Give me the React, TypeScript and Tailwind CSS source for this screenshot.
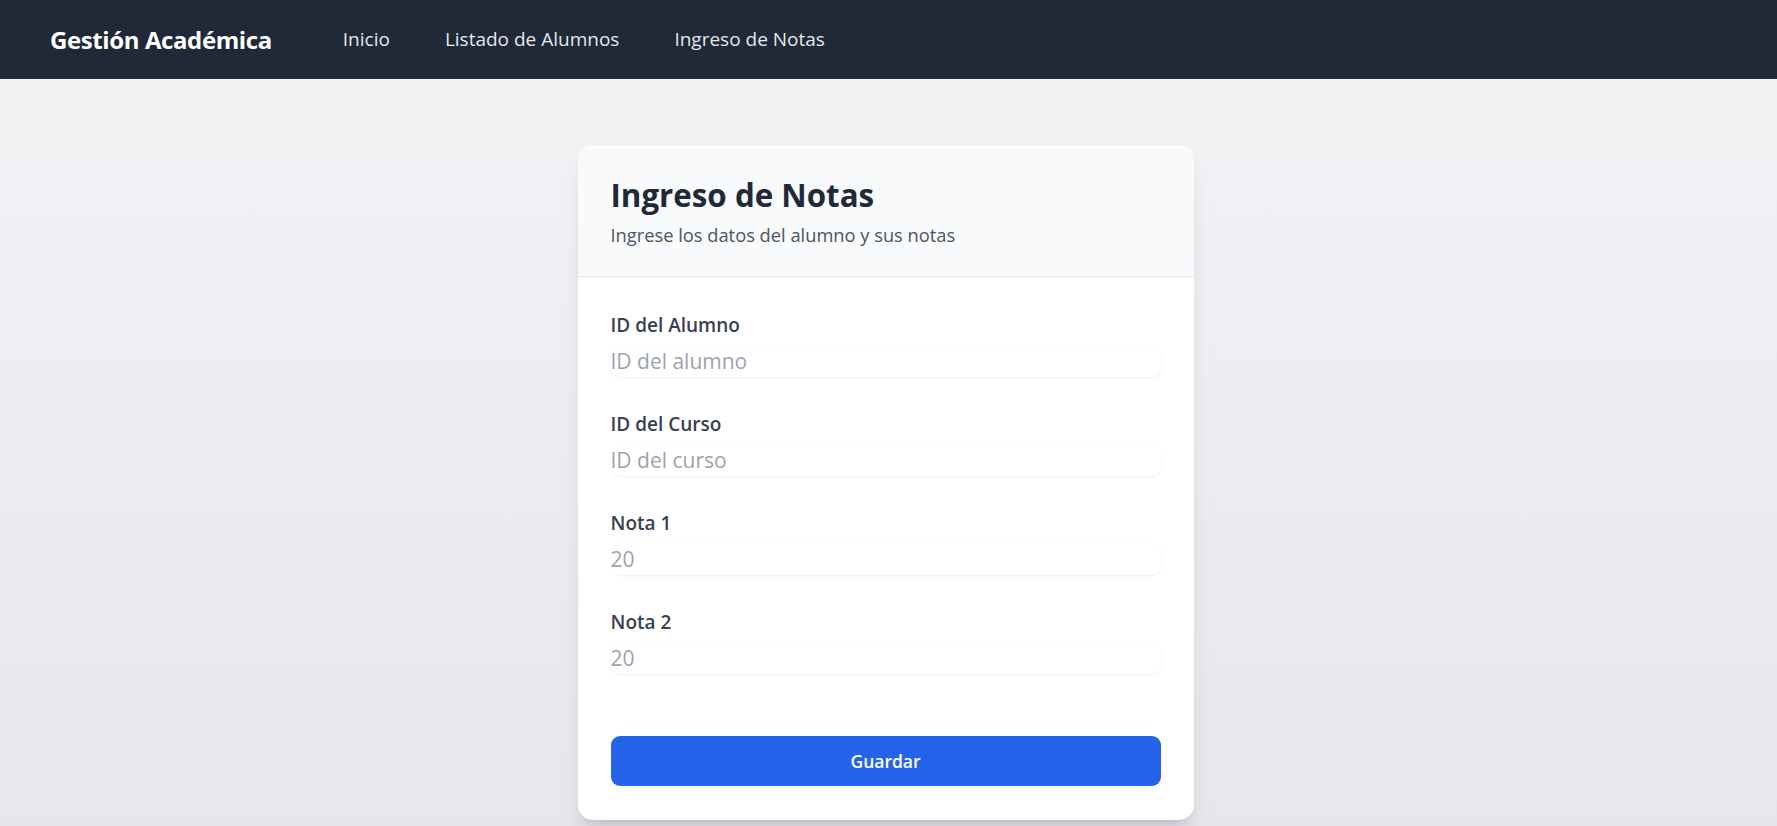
const fields = [
  { label: 'ID del Alumno', placeholder: 'ID del alumno', type: 'text' },
  { label: 'ID del Curso', placeholder: 'ID del curso', type: 'text' },
  { label: 'Nota 1', placeholder: '20', type: 'number' },
  { label: 'Nota 2', placeholder: '20', type: 'number' },
]

const links = ['Inicio', 'Listado de Alumnos', 'Ingreso de Notas']

export default function App() {
  return (
    <div className="min-h-screen bg-gradient-to-b from-[#f3f4f6] to-[#e6e7eb] font-['Open_Sans',sans-serif]">
      <nav className="h-[79px] bg-[#1f2937] flex items-center px-[50px]">
        <a href="#" className="text-white text-[24px] font-bold tracking-[-0.4px]">Gestión Académica</a>
        <ul className="flex items-center gap-[55px] ml-[71px]">
          {links.map((l) => (
            <li key={l}>
              <a href="#" className="text-[#e5e7eb] text-[19px] font-medium">{l}</a>
            </li>
          ))}
        </ul>
      </nav>

      <main className="pt-[66px] pr-[6px]">
        <div className="w-[616px] mx-auto bg-white rounded-[15px] shadow-xl overflow-hidden">
          <div className="bg-[#f8fafc] border-b border-[#e5e7eb] px-[33px] pt-[32px] pb-[27px]">
            <h1 className="text-[31.3px] leading-[36px] font-bold text-[#1f2937]">Ingreso de Notas</h1>
            <p className="mt-[8px] text-[18.3px] leading-[28px] text-[#4b5563]">Ingrese los datos del alumno y sus notas</p>
          </div>

          <form className="px-[33px] pt-[34px] pb-[34px]" onSubmit={(e) => e.preventDefault()}>
            <div className="flex flex-col gap-[33px]">
              {fields.map((f) => (
                <div key={f.label}>
                  <label className="block text-[19px] leading-[28px] font-semibold text-[#374151] mb-[6px]">{f.label}</label>
                  <input
                    type={f.type}
                    placeholder={f.placeholder}
                    className="w-full h-[32px] bg-white rounded-[10px] shadow-[0_1px_3px_rgba(0,0,0,0.06)] text-[21px] text-[#1f2937] placeholder:text-[#9ca3af] outline-none"
                  />
                </div>
              ))}
            </div>
            <button
              type="submit"
              className="mt-[62px] w-full h-[50px] bg-[#2563eb] rounded-[9px] text-white text-[17.5px] font-semibold"
            >
              Guardar
            </button>
          </form>
        </div>
      </main>
    </div>
  )
}
